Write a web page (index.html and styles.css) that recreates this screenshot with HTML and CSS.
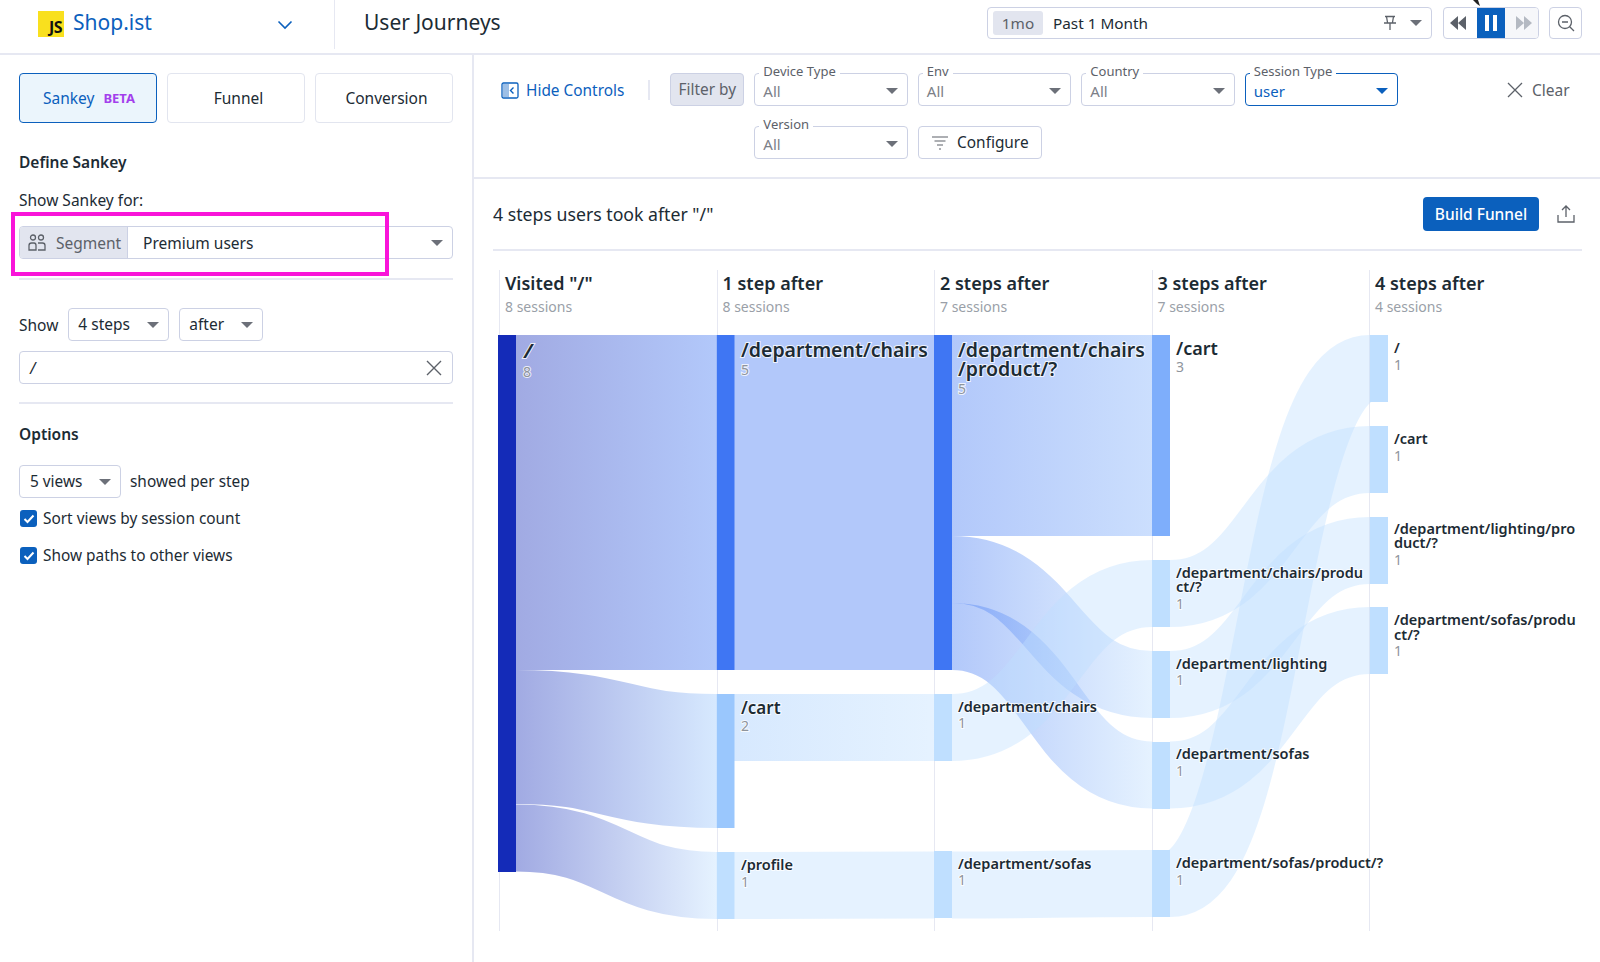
FILE: index.html
```html
<!DOCTYPE html>
<html lang="en">
<head>
  <meta charset="UTF-8">
  <title>User Journeys</title>
  <link rel="stylesheet" href="styles.css">
</head>
<body>

<header class="topbar">
  <div class="app-switch">
    <span class="js-logo">JS</span>
    <span class="app-name">Shop.ist</span>
    <svg class="chevron" width="16" height="10" viewBox="0 0 16 10"><path d="M1.500 1.500 8 8l6.500-6.500" fill="none" stroke="#0b60bd" stroke-width="1.600"/></svg>
  </div>
  <div class="page-title">User Journeys</div>
  <div class="time-controls">
    <div class="time-picker">
      <span class="time-chip">1mo</span>
      <span class="time-label">Past 1 Month</span>
      <svg class="pin" width="14" height="16" viewBox="0 0 14 16"><path d="M2 1.500h10M3.500 1.500 4.500 7.500M10.500 1.500 9.500 7.500M1 8h12M7 8v7" fill="none" stroke="#5c6169" stroke-width="1.300"/></svg>
      <span class="caret"></span>
    </div>
    <div class="playback">
      <span class="play-btn rewind"><svg width="18" height="14" viewBox="0 0 18 14"><path d="M9 0v14L1 7zM17 0v14L9 7z" fill="#5c6169"/></svg></span>
      <span class="play-btn active"><svg width="14" height="16" viewBox="0 0 14 16"><path d="M1 0h4v16H1zM9 0h4v16H9z" fill="#fff"/></svg></span>
      <span class="play-btn off"><svg width="18" height="14" viewBox="0 0 18 14"><path d="M1 0v14l8-7zM9 0v14l8-7z" fill="#b4b9c2"/></svg></span>
    </div>
    <span class="zoom-btn"><svg width="18" height="18" viewBox="0 0 18 18"><circle cx="8" cy="8" r="6.500" fill="none" stroke="#5c6169" stroke-width="1.300"/><path d="M5 8h6M12.700 12.700 17 17" fill="none" stroke="#5c6169" stroke-width="1.300"/></svg></span>
  </div>
  <svg class="cursor-tip" width="10" height="6" viewBox="0 0 10 6"><path d="M1 0h5l2 6-3-2z" fill="#222"/></svg>
</header>

<div class="main">
  <aside class="sidebar">
    <div class="tabs">
      <span class="tab active">Sankey <b class="beta">BETA</b></span>
      <span class="tab">Funnel</span>
      <span class="tab">Conversion</span>
    </div>

    <h3 class="define-title">Define Sankey</h3>
    <div class="show-for">Show Sankey for:</div>
    <div class="segment-field">
      <span class="segment-tag">
        <svg width="18" height="17" viewBox="0 0 18 17"><g fill="none" stroke="#5c6169" stroke-width="1.300"><circle cx="5" cy="3.500" r="2.500"/><circle cx="13" cy="3.500" r="2.500"/><path d="M1 16v-4.500Q1 9 3.500 9H6q2 0 2 2.500V16zM10 9h4.500Q17 9 17 11.500V16h-7"/></g></svg>
        Segment
      </span>
      <span class="segment-value">Premium users</span>
      <span class="caret"></span>
    </div>
    <div class="highlight"></div>
    <hr class="rule rule-first">

    <div class="show-row">
      <span>Show</span>
      <span class="dropdown steps">4 steps<span class="caret"></span></span>
      <span class="dropdown after">after<span class="caret"></span></span>
    </div>
    <div class="path-input">
      <i>/</i>
      <svg width="16" height="16" viewBox="0 0 16 16"><path d="M1 1l14 14M15 1 1 15" stroke="#5c6169" stroke-width="1.400"/></svg>
    </div>
    <hr class="rule rule-second">

    <h3 class="options-title">Options</h3>
    <div class="views-row">
      <span class="dropdown views">5 views<span class="caret"></span></span>
      <span>showed per step</span>
    </div>
    <label class="check first-check">
      <span class="box"><svg width="12" height="10" viewBox="0 0 12 10"><path d="M1.500 5 4.500 8l6-6.500" fill="none" stroke="#fff" stroke-width="2"/></svg></span>
      Sort views by session count
    </label>
    <label class="check">
      <span class="box"><svg width="12" height="10" viewBox="0 0 12 10"><path d="M1.500 5 4.500 8l6-6.500" fill="none" stroke="#fff" stroke-width="2"/></svg></span>
      Show paths to other views
    </label>
  </aside>

  <section class="content">
    <div class="filters">
      <a class="hide-controls">
        <svg width="18" height="17" viewBox="0 0 18 17"><rect x="1" y="1" width="16" height="15" rx="1.500" fill="#fff" stroke="#0b60bd" stroke-width="1.300"/><rect x="2" y="2" width="6" height="13" fill="#9dbfe6"/><path d="M12.500 5.500 9.500 8.500l3 3" fill="none" stroke="#0b60bd" stroke-width="1.400"/></svg>
        Hide Controls
      </a>
      <span class="sep"></span>
      <span class="filter-by">Filter by</span>
      <div class="filter-grid">
        <div class="float-select"><span class="float-label">Device Type</span>All<span class="caret"></span></div>
        <div class="float-select"><span class="float-label">Env</span>All<span class="caret"></span></div>
        <div class="float-select"><span class="float-label">Country</span>All<span class="caret"></span></div>
        <div class="float-select selected"><span class="float-label">Session Type</span>user<span class="caret"></span></div>
        <div class="float-select"><span class="float-label">Version</span>All<span class="caret"></span></div>
        <div class="configure">
          <svg width="18" height="14" viewBox="0 0 18 14"><path d="M1 1h16M3.500 5h11M6 9h6M8 13h2" stroke="#5c6169" stroke-width="1.200"/></svg>
          Configure
        </div>
      </div>
      <span class="clear">
        <svg width="16" height="16" viewBox="0 0 16 16"><path d="M1 1l14 14M15 1 1 15" stroke="#5c6169" stroke-width="1.300"/></svg>
        Clear
      </span>
    </div>

    <div class="chart-panel">
      <div class="chart-head">
        <span class="chart-title">4 steps users took after "/"</span>
        <span class="build-funnel">Build Funnel</span>
        <svg class="share" width="18" height="18" viewBox="0 0 18 18"><path d="M9 12V1.500M5 5l4-4 4 4M1 10v7h16v-7" fill="none" stroke="#5c6169" stroke-width="1.300"/></svg>
      </div>

      <div class="sankey">
        <div class="step"><h4>Visited "/"</h4><small>8 sessions</small></div>
        <div class="step"><h4>1 step after</h4><small>8 sessions</small></div>
        <div class="step"><h4>2 steps after</h4><small>7 sessions</small></div>
        <div class="step"><h4>3 steps after</h4><small>7 sessions</small></div>
        <div class="step"><h4>4 steps after</h4><small>4 sessions</small></div>

        <!-- viewBox uses page coordinates so the numbers read off the layout directly -->
        <svg class="flow" width="1108" height="670" viewBox="492 264 1108 670">
          <defs>
            <linearGradient id="g-dark-blue" gradientUnits="userSpaceOnUse" x1="516" x2="716"><stop offset="0" stop-color="#142bb8"/><stop offset="1" stop-color="#3f76f3"/></linearGradient>
            <linearGradient id="g-dark-two" gradientUnits="userSpaceOnUse" x1="516" x2="716"><stop offset="0" stop-color="#142bb8"/><stop offset="1" stop-color="#9ac7fd"/></linearGradient>
            <linearGradient id="g-dark-one" gradientUnits="userSpaceOnUse" x1="516" x2="716"><stop offset="0" stop-color="#142bb8"/><stop offset="1" stop-color="#bfdfff"/></linearGradient>
            <linearGradient id="g-two-one" gradientUnits="userSpaceOnUse" x1="734" x2="934"><stop offset="0" stop-color="#9ac7fd"/><stop offset="1" stop-color="#bfdfff"/></linearGradient>
            <linearGradient id="g-blue-three" gradientUnits="userSpaceOnUse" x1="952" x2="1152"><stop offset="0" stop-color="#3f76f3"/><stop offset="1" stop-color="#7eaefb"/></linearGradient>
            <linearGradient id="g-blue-one" gradientUnits="userSpaceOnUse" x1="952" x2="1152"><stop offset="0" stop-color="#3f76f3"/><stop offset="1" stop-color="#bfdfff"/></linearGradient>
          </defs>

          <g class="links">
            <path d="M516 502.500H716" stroke="url(#g-dark-blue)" stroke-width="335"/>
            <path d="M516 737C616 737 616 761 716 761" stroke="url(#g-dark-two)" stroke-width="134"/>
            <path d="M516 838C616 838 616 885.500 716 885.500" stroke="url(#g-dark-one)" stroke-width="67"/>

            <path d="M734 502.500H934" stroke="#3f76f3" stroke-width="335"/>
            <path d="M734 727.500H934" stroke="url(#g-two-one)" stroke-width="67"/>
            <path d="M734 885.500C834 885.500 834 885 934 885" stroke="#bfdfff" stroke-width="67"/>

            <path d="M952 435.500H1152" stroke="url(#g-blue-three)" stroke-width="201"/>
            <path d="M952 569.500C1052 569.500 1052 684.500 1152 684.500" stroke="url(#g-blue-one)" stroke-width="67"/>
            <path d="M952 636.500C1052 636.500 1052 775 1152 775" stroke="url(#g-blue-one)" stroke-width="67"/>
            <path d="M952 727.500C1052 727.500 1052 593.500 1152 593.500" stroke="#bfdfff" stroke-width="67"/>
            <path d="M952 885C1052 885 1052 883.500 1152 883.500" stroke="#bfdfff" stroke-width="67"/>

            <path d="M1170 883.500C1270 883.500 1270 368.500 1370 368.500" stroke="#bfdfff" stroke-width="67"/>
            <path d="M1170 593.500C1270 593.500 1270 459.500 1370 459.500" stroke="#bfdfff" stroke-width="67"/>
            <path d="M1170 684.500C1270 684.500 1270 550.500 1370 550.500" stroke="#bfdfff" stroke-width="67"/>
            <path d="M1170 775C1270 775 1270 640.500 1370 640.500" stroke="#bfdfff" stroke-width="67"/>
          </g>

          <g class="nodes">
            <rect x="498" y="335" width="18" height="537" fill="#142bb8"/>

            <rect x="716.500" y="335" width="18" height="335" fill="#3f76f3"/>
            <rect x="716.500" y="694" width="18" height="134" fill="#9ac7fd"/>
            <rect x="716.500" y="852" width="18" height="67" fill="#bfdfff"/>

            <rect x="934" y="335" width="18" height="335" fill="#3f76f3"/>
            <rect x="934" y="694" width="18" height="67" fill="#bfdfff"/>
            <rect x="934" y="851" width="18" height="67" fill="#bfdfff"/>

            <rect x="1152" y="335" width="18" height="201" fill="#7eaefb"/>
            <rect x="1152" y="560" width="18" height="67" fill="#bfdfff"/>
            <rect x="1152" y="651" width="18" height="67" fill="#bfdfff"/>
            <rect x="1152" y="742" width="18" height="67" fill="#bfdfff"/>
            <rect x="1152" y="850" width="18" height="67" fill="#bfdfff"/>

            <rect x="1370" y="335" width="18" height="67" fill="#bfdfff"/>
            <rect x="1370" y="426" width="18" height="67" fill="#bfdfff"/>
            <rect x="1370" y="517" width="18" height="67" fill="#bfdfff"/>
            <rect x="1370" y="607" width="18" height="67" fill="#bfdfff"/>
          </g>

          <g class="labels">
            <text class="name n8" x="524" y="358">/</text><text class="num" x="523" y="377">8</text>

            <text class="name n5" x="741" y="357">/department/chairs</text><text class="num" x="741" y="375">5</text>
            <text class="name n2" x="741" y="714">/cart</text><text class="num" x="741" y="731">2</text>
            <text class="name n1" x="741" y="870">/profile</text><text class="num" x="741" y="887">1</text>

            <text class="name n5" x="958" y="357">/department/chairs<tspan x="958" dy="19">/product/?</tspan></text><text class="num" x="958" y="394">5</text>
            <text class="name n1" x="958" y="712">/department/chairs</text><text class="num" x="958" y="728">1</text>
            <text class="name n1" x="958" y="869">/department/sofas</text><text class="num" x="958" y="885">1</text>

            <text class="name n3" x="1176" y="355">/cart</text><text class="num" x="1176" y="372">3</text>
            <text class="name n1" x="1176" y="578">/department/chairs/produ<tspan x="1176" dy="14">ct/?</tspan></text><text class="num" x="1176" y="609">1</text>
            <text class="name n1" x="1176" y="669">/department/lighting</text><text class="num" x="1176" y="685">1</text>
            <text class="name n1" x="1176" y="759">/department/sofas</text><text class="num" x="1176" y="776">1</text>
            <text class="name n1" x="1176" y="868">/department/sofas/product/?</text><text class="num" x="1176" y="885">1</text>

            <text class="name n1" x="1394" y="353">/</text><text class="num" x="1394" y="370">1</text>
            <text class="name n1" x="1394" y="444">/cart</text><text class="num" x="1394" y="461">1</text>
            <text class="name n1" x="1394" y="534">/department/lighting/pro<tspan x="1394" dy="14">duct/?</tspan></text><text class="num" x="1394" y="565">1</text>
            <text class="name n1" x="1394" y="625">/department/sofas/produ<tspan x="1394" dy="15">ct/?</tspan></text><text class="num" x="1394" y="656">1</text>
          </g>
        </svg>
      </div>
    </div>
  </section>
</div>

</body>
</html>
```

FILE: styles.css
```css
* {
  box-sizing: border-box;
}
body {
  margin: 0;
  height: 962px;
  overflow: hidden;
  background-color: white;
  color: #1c2b34;
  font-family: "Noto Sans", "Open Sans", sans-serif;
  font-size: 15px;
}

/* top bar */
.topbar {
  position: relative;
  height: 55px;
  display: flex;
  align-items: flex-start;
  border-bottom: 2px solid #e6e8f2;
}
.app-switch {
  width: 335px;
  height: 49px;
  padding: 0 41px 0 38px;
  display: flex;
  align-items: center;
  align-self: flex-start;
  border-right: 1px solid #e6e8f2;
}
.js-logo {
  width: 26px;
  height: 26px;
  padding: 0 2px 2px 0;
  display: flex;
  align-items: flex-end;
  justify-content: flex-end;
  background-color: #f9e01e;
  color: #111;
  font-size: 16px;
  font-weight: 700;
  letter-spacing: -0.5px;
  line-height: 15px;
  margin-bottom: 2px;
}
.app-name {
  margin-left: 9px;
  margin-bottom: 5px;
  flex: 1;
  color: #0b60bd;
  font-size: 21px;
}
.page-title {
  margin-left: 29px;
  font-size: 21px;
  line-height: 45px;
}
.time-controls {
  margin-left: auto;
  padding: 7px 18px 0 0;
  display: flex;
}
.time-picker {
  width: 445px;
  height: 32px;
  padding: 0 7px 0 5px;
  display: flex;
  align-items: center;
  border: 1.500px solid #ccd1e4;
  border-radius: 4px;
  font-size: 15.300px;
}
.time-chip {
  width: 50px;
  height: 24px;
  background-color: #e2e5ef;
  border-radius: 3px;
  color: #5c6169;
  line-height: 24px;
  text-align: center;
}
.time-label {
  margin-left: 10px;
  flex: 1;
}
.pin {
  margin-right: 13px;
}
.time-picker .caret {
  position: static;
  margin-top: 0;
  margin-right: 2px;
}
.playback {
  margin-left: 11px;
  width: 96px;
  height: 32px;
  display: flex;
  border: 1.500px solid #ccd1e4;
  border-radius: 4px;
  overflow: hidden;
}
.play-btn {
  flex: 1;
  display: flex;
  align-items: center;
  justify-content: center;
}
.play-btn.rewind {
  padding-right: 4px;
}
.play-btn.active {
  background-color: #0b60bd;
}
.play-btn.off {
  padding-left: 4px;
  background-color: #f6f7fa;
}
.zoom-btn {
  margin-left: 10px;
  width: 33px;
  height: 32px;
  display: flex;
  align-items: center;
  justify-content: center;
  border: 1.500px solid #ccd1e4;
  border-radius: 4px;
}
.cursor-tip {
  position: absolute;
  left: 1472px;
  top: 0;
}

.main {
  display: flex;
  height: 907px;
}

/* left side */
.sidebar {
  position: relative;
  width: 474px;
  padding: 18px 19px 0 19px;
  border-right: 2px solid #e6e8f2;
}
.tabs {
  display: flex;
  gap: 10px;
}
.tab {
  flex: 0 0 138px;
  height: 50px;
  padding-left: 5px;
  display: flex;
  align-items: center;
  justify-content: center;
  border: 1.500px solid #e2e5ef;
  border-radius: 4px;
  font-size: 15.500px;
}
.tab.active {
  padding-left: 2px;
  background-color: #ebf5fc;
  border-color: #0b60bd;
  color: #0b60bd;
}
.beta {
  margin-left: 9px;
  color: #a33fec;
  font-size: 13px;
}
h3 {
  margin: 0;
  font-size: 15.500px;
  font-weight: 600;
}
.define-title {
  margin-top: 28px;
  line-height: 22px;
}
.show-for {
  margin-top: 16px;
  line-height: 22px;
  font-size: 15.500px;
}
.segment-field {
  position: relative;
  margin-top: 15px;
  height: 33px;
  display: flex;
  align-items: center;
  border: 1.500px solid #ccd1e4;
  border-radius: 4px;
  overflow: hidden;
  font-size: 15.500px;
}
.segment-tag {
  width: 108px;
  height: 100%;
  padding-left: 8px;
  display: flex;
  align-items: center;
  gap: 10px;
  background-color: #e2e5ef;
  border-right: 1.500px solid #ccd1e4;
  color: #5c6169;
}
.segment-value {
  margin-left: 15px;
}
.caret {
  position: absolute;
  right: 9px;
  top: 50%;
  margin-top: -3px;
  width: 0;
  height: 0;
  border-left: 6px solid transparent;
  border-right: 6px solid transparent;
  border-top: 6px solid #6c7079;
}
.highlight {
  position: absolute;
  left: 11px;
  top: 157px;
  width: 378px;
  height: 64px;
  border: 4px solid #f914d9;
}
.rule {
  margin: 0;
  border: 0;
  border-top: 2px solid #e6e8f2;
}
.rule-first {
  margin-top: 19px;
}
.show-row {
  margin-top: 28px;
  display: flex;
  align-items: center;
  font-size: 15.500px;
}
.dropdown {
  position: relative;
  height: 33px;
  padding-left: 9px;
  display: block;
  border: 1.500px solid #ccd1e4;
  border-radius: 4px;
  line-height: 30px;
}
.steps {
  margin-left: 10px;
  width: 101px;
}
.after {
  margin-left: 10px;
  width: 84px;
}
.path-input {
  margin-top: 10px;
  height: 33px;
  padding: 0 10px;
  display: flex;
  align-items: center;
  justify-content: space-between;
  border: 1.500px solid #ccd1e4;
  border-radius: 4px;
  font-size: 15.500px;
}
.rule-second {
  margin-top: 18px;
}
.options-title {
  margin-top: 19px;
  line-height: 22px;
}
.views-row {
  margin-top: 20px;
  display: flex;
  align-items: center;
  gap: 9px;
  font-size: 15.400px;
}
.views {
  width: 102px;
  padding-left: 10px;
  line-height: 31px;
}
.check {
  margin-top: 20px;
  height: 17px;
  padding-left: 1px;
  display: flex;
  align-items: center;
  gap: 6px;
  font-size: 15.400px;
}
.first-check {
  margin-top: 12px;
}
.box {
  width: 17px;
  height: 17px;
  display: flex;
  align-items: center;
  justify-content: center;
  background-color: #0b60bd;
  border-radius: 3px;
}

/* filters */
.content {
  flex: 1;
}
.filters {
  position: relative;
  height: 124px;
  padding: 18px 0 0 27px;
  display: flex;
  align-items: flex-start;
  border-bottom: 2px solid #e6e8f2;
}
.hide-controls {
  height: 33px;
  margin-top: 1px;
  display: flex;
  align-items: center;
  gap: 7px;
  color: #0b60bd;
  font-size: 15.400px;
}
.sep {
  margin: 7px 0 0 24px;
  width: 2px;
  height: 20px;
  background-color: #e6e8f2;
}
.filter-by {
  margin-left: 20px;
  width: 74px;
  height: 33px;
  background-color: #e2e5ef;
  border: 1.500px solid #ccd1e4;
  border-radius: 4px;
  color: #5c6169;
  font-size: 15.400px;
  line-height: 31px;
  text-align: center;
}
.filter-grid {
  margin-left: 10px;
  width: 645px;
  display: flex;
  flex-wrap: wrap;
  gap: 20px 10px;
}
.float-select {
  position: relative;
  width: 153.500px;
  height: 33px;
  padding: 6px 0 0 8px;
  border: 1.500px solid #ccd1e4;
  border-radius: 4px;
  color: #7c8088;
  font-size: 15px;
  line-height: 22px;
}
.float-select .caret {
  margin-top: -2px;
}
.float-select.selected {
  border-color: #0b60bd;
  color: #0b60bd;
}
.float-select.selected .caret {
  border-top-color: #0b60bd;
}
.float-label {
  position: absolute;
  left: 4px;
  top: -11px;
  padding: 0 4px;
  background-color: white;
  color: #5c6169;
  font-size: 13px;
  line-height: 16px;
}
.configure {
  width: 124px;
  height: 33px;
  display: flex;
  align-items: center;
  justify-content: center;
  gap: 8px;
  border: 1.500px solid #ccd1e4;
  border-radius: 4px;
  font-size: 15.400px;
}
.clear {
  position: absolute;
  left: 1033px;
  top: 21px;
  display: flex;
  align-items: center;
  gap: 9px;
  color: #5c6169;
  font-size: 15.500px;
  line-height: 28px;
}

/* chart */
.chart-panel {
  padding: 0 18px 0 19px;
}
.chart-head {
  height: 72px;
  display: flex;
  align-items: center;
  border-bottom: 2px solid #e6e8f2;
}
.chart-title {
  flex: 1;
  font-size: 17.700px;
}
.build-funnel {
  width: 116px;
  height: 34px;
  background-color: #0b60bd;
  border-radius: 4px;
  color: white;
  font-size: 15.500px;
  font-weight: 500;
  line-height: 34px;
  text-align: center;
}
.share {
  margin: 0 7px 0 18px;
}
.sankey {
  position: relative;
  margin: 19px 0 0 6px;
  display: flex;
}
.step {
  width: 217.500px;
  height: 661px;
  padding: 0 0 0 5px;
  border-left: 1.500px solid #e6e8f2;
}
.step:last-of-type {
  width: 200px;
}
.step h4 {
  margin: 0;
  padding-top: 1px;
  font-size: 18px;
  font-weight: 600;
  line-height: 25px;
}
.step small {
  display: block;
  color: #9a9fa8;
  font-size: 14px;
  line-height: 22px;
}
.flow {
  position: absolute;
  left: -7px;
  top: -6px;
}
.links path {
  fill: none;
  stroke-opacity: 0.4;
}
.labels text {
  font-family: "Noto Sans", "Open Sans", sans-serif;
  paint-order: stroke;
  stroke: rgba(255, 255, 255, 0.8);
  stroke-width: 2px;
}
.name {
  fill: #1c2b34;
  font-weight: 600;
}
.n8 {
  font-size: 20px;
  font-weight: 700;
  font-style: italic;
}
.n5 {
  font-size: 19.500px;
}
.n3 {
  font-size: 18px;
}
.n2 {
  font-size: 17px;
}
.n1 {
  font-size: 14.500px;
}
.num {
  fill: #8f949c;
  font-size: 14px;
}
```
